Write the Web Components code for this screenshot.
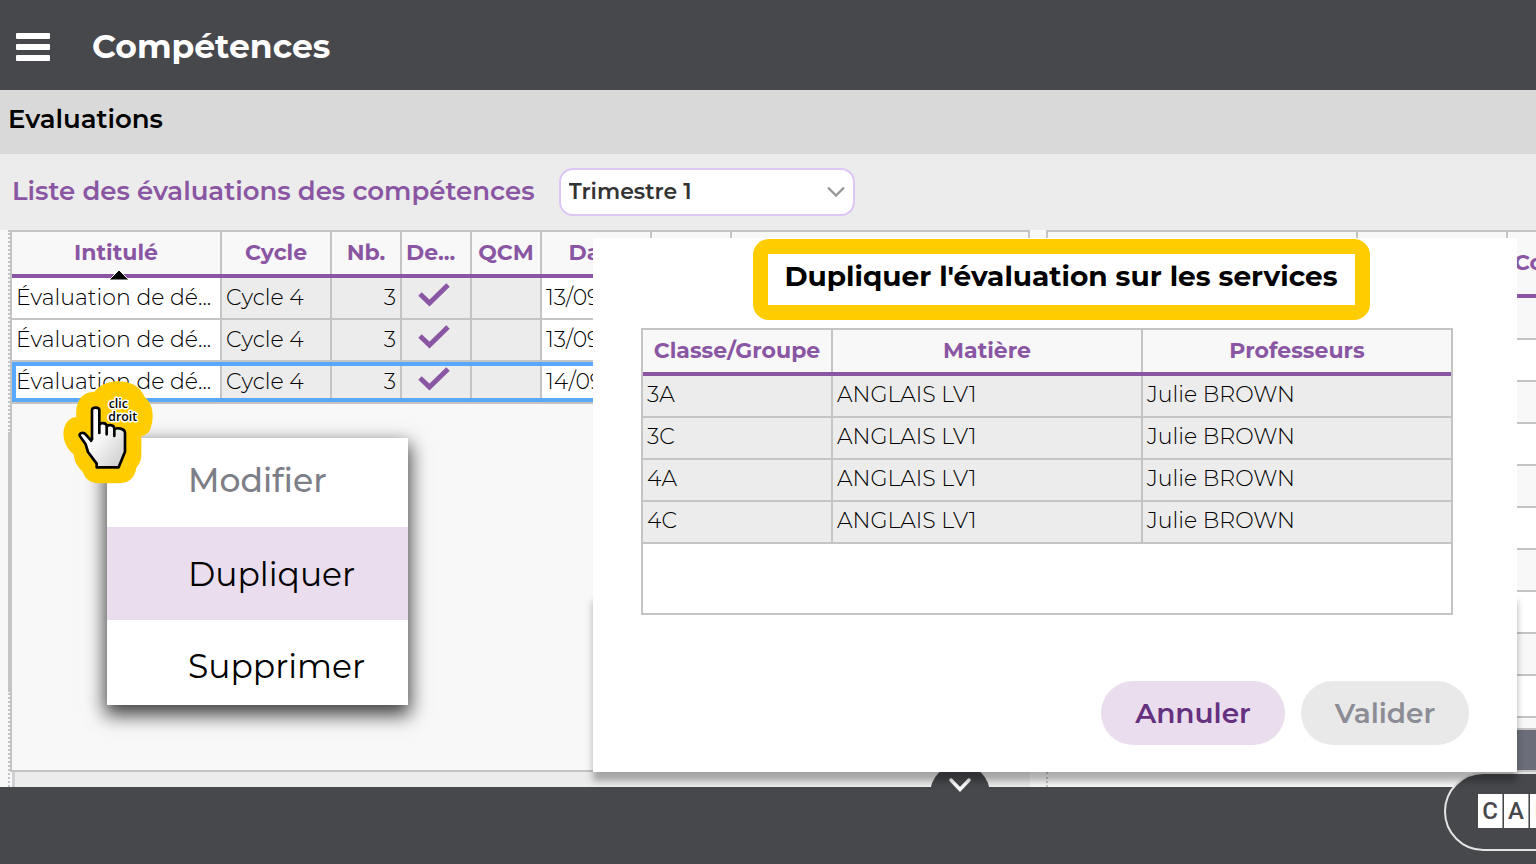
<!DOCTYPE html>
<html lang="fr">
<head>
<meta charset="utf-8">
<title>Compétences</title>
<style>
html, body { margin: 0; height: 100%; }
body { overflow: hidden; font-family: Montserrat, Inter, "Open Sans", sans-serif; font-size: 22px; color: #000;
  --violet: #8a56a3; --line: #c4c4c4; --dark: #47484c; --pale: #f8f8f8; --grey: #ececec; --mark: #fc0; }
</style>
</head>
<body>
<competence-app></competence-app>
<script>
const define = (name, html, setup) => {
  const template = document.createElement('template');
  template.innerHTML = html;
  customElements.define(name, class extends HTMLElement {
    constructor() {
      super();
      this.attachShadow({ mode: 'open' }).append(template.content.cloneNode(true));
    }
    connectedCallback() { if (setup) setup(this, this.shadowRoot); }
  });
};

define('app-header', `
<style>
:host { display: flex; align-items: center; gap: 42px; height: 90px; padding: 0 16px; background: var(--dark); color: #fff; box-sizing: border-box; }
button { all: unset; width: 34px; height: 30px; margin-top: 4px; }
svg { display: block; }
h1 { margin: 2px 0 0; font-size: 33px; line-height: 44px; font-weight: 700; }
</style>
<button aria-label="Menu"><svg width="34" height="30"><g fill="#fff"><rect y="1" width="34" height="6" rx="1"/><rect y="12" width="34" height="6" rx="1"/><rect y="23" width="34" height="6" rx="1"/></g></svg></button>
<h1><slot></slot></h1>`);

define('page-band', `
<style>
:host { display: block; height: 64px; padding: 12px 8px; background: #d9d9d9; box-sizing: border-box; }
h2 { margin: 0; font-size: 26px; line-height: 34px; font-weight: 600; }
</style>
<h2><slot></slot></h2>`);

define('filter-bar', `
<style>
:host { display: flex; align-items: center; gap: 24px; height: 76px; padding: 0 12px; background: var(--grey); box-sizing: border-box; }
label { color: var(--violet); font-size: 26px; line-height: 32px; font-weight: 600; padding-bottom: 2px; }
.box { position: relative; width: 296px; height: 48px; }
select { appearance: none; width: 100%; height: 100%; margin: 0; padding: 0 8px; border: 2px solid #dcc6f5; border-radius: 14px; background: #fff; color: #333; font: 600 22px/30px Montserrat, Inter, sans-serif; }
svg { position: absolute; right: 10px; top: 18px; }
</style>
<label for="period"><slot></slot></label>
<div class="box"><select id="period"><option>Trimestre 1</option></select>
<svg width="18" height="12" fill="none" stroke="#999" stroke-width="2.4"><path d="M1 1.500 9 9.500l8-8"/></svg></div>`);

define('check-mark', `
<style>:host { display: block; } svg { display: block; margin: 4px auto 0; }</style>
<svg width="34" height="26" fill="none" stroke="#8a56a3" stroke-width="5"><path d="M3 12 12.500 21 31 3"/></svg>`);

define('eval-table', `
<style>
:host { display: block; flex: none; width: 1020px; border: 2px solid var(--line); background: var(--pale); box-sizing: border-box; }
table { table-layout: fixed; width: 100%; border-spacing: 0; }
th, td { box-sizing: border-box; padding: 0 4px; overflow: hidden; white-space: nowrap; }
td { border-right: 2px solid var(--line); }
td:last-child { border-right: 0; }
th { height: 46px; padding-right: 6px; border-bottom: 4px solid var(--violet); background: linear-gradient(var(--line), var(--line)) right / 2px 100% no-repeat; color: var(--violet); line-height: 40px; font-weight: 700; }
th:last-child { background: none; }
th:nth-child(4) { text-align: left; }
td { height: 42px; border-bottom: 2px solid var(--line); background: var(--grey); line-height: 40px; font-weight: 300; vertical-align: top; }
td:first-child { background: #fff; }
td:nth-child(n+6) { background: #fff; }
td:nth-child(3) { text-align: right; }
td:nth-child(4) { padding-right: 8px; }
.sorted { position: relative; z-index: 1; overflow: visible; }
.sorted svg { position: absolute; left: 96px; top: 37px; }
.wrap { position: relative; }
.selection { position: absolute; left: 0; right: 0; bottom: 2px; height: 32px; border: 4px solid #4da3ffee; border-right: 0; }
</style>
<div class="wrap">
<table>
<colgroup><col style="width:210px"><col style="width:110px"><col style="width:70px"><col style="width:70px"><col style="width:70px"><col style="width:110px"><col style="width:80px"><col></colgroup>
<thead><tr><th class="sorted">Intitulé<svg width="22" height="12"><path d="M1 11 11 1 21 11z" fill="#000" stroke="#fff"/></svg></th><th>Cycle</th><th>Nb.</th><th>De...</th><th>QCM</th><th>Date</th><th></th><th></th></tr></thead>
<tbody></tbody>
</table>
<div class="selection"></div>
</div>`, (host, root) => {
  root.querySelector('tbody').innerHTML = ['13/09', '13/09', '14/09'].map(d =>
    `<tr><td>Évaluation de dé...</td><td>Cycle 4</td><td>3</td><td><check-mark></check-mark></td><td></td><td>${d}</td><td></td><td></td></tr>`).join('');
});

define('result-table', `
<style>
:host { display: flex; flex-direction: column; flex: 1; min-width: 0; border: 2px solid var(--line); border-right: 0; overflow: hidden; background: var(--pale); box-sizing: border-box; }
table { table-layout: fixed; width: 600px; border-spacing: 0; }
th, td { box-sizing: border-box; padding: 0 6px; border-right: 2px solid var(--line); }
th { height: 66px; border-bottom: 4px solid var(--violet); color: var(--violet); line-height: 30px; font-weight: 700; text-align: left; }
td { height: 42px; border-bottom: 2px solid var(--line); }
tr:nth-child(even) td { background: #fff; }
.total { height: 40px; margin-top: auto; border-top: 2px solid var(--line); background: #6b6e78; }
</style>
<table><colgroup><col style="width:310px"><col style="width:150px"><col></colgroup>
<thead><tr><th></th><th></th><th>Coef.</th></tr></thead>
<tbody></tbody></table>
<div class="total"></div>`, (host, root) => {
  root.querySelector('tbody').innerHTML = '<tr><td></td><td></td><td></td></tr>'.repeat(10);
});

define('click-hand', `
<style>:host { display: block; width: 90px; height: 103px; } svg { display: block; }</style>
<svg width="90" height="103" viewBox="38 32 270 309">
<defs><linearGradient id="g" x1="0" y1="0" x2="1" y2="1"><stop offset=".4" stop-color="#fff"/><stop offset="1" stop-color="#c8c8c8"/></linearGradient></defs>
<path fill="#fc0" d="M78 141C76 105 84 66 132 64 155 38 181 33 205 33 240 33 270 48 283 80 312 104 309 145 303 165 300 185 290 193 273 198V252C273 270 268 280 258 292 253 325 236 338 200 339H150C112 339 102 319 98 306 78 284 73 275 70 252 30 220 32 164 60 146 66 142 72 140 78 141Z"/>
<path fill="url(#g)" stroke="#000" stroke-width="8" stroke-linejoin="round" d="M125 209V120C125 109 147 109 147 120V188 164C149 156 167 156 169 166V192 170C172 162 190 162 192 174V197 178C198 170 224 174 224 188V244L205 291H139V280L113 245 106 222 88 196C86 187 100 185 106 192L125 214"/>
<text font-family="Open Sans, sans-serif" font-size="37" font-weight="600" fill="#000" stroke="#fff" stroke-width="9" stroke-linejoin="round" paint-order="stroke"><tspan x="175" y="114">clic</tspan><tspan x="174" y="153">droit</tspan></text>
</svg>`);

define('context-menu', `
<style>
:host { display: block; width: 301px; background: #fff; box-shadow: 0 8px 18px 2px rgba(0,0,0,.75); }
button { all: unset; display: block; box-sizing: border-box; width: 100%; height: 93px; padding-left: 81px; font-size: 33px; line-height: 80px; font-weight: 400; }
button:disabled { height: 89px; padding-bottom: 6px; font-weight: 500; color: #7d7f88; }
button:nth-of-type(2) { background: #eaddee; }
button:last-child { height: 85px; padding-top: 8px; line-height: 77px; }
</style>
<button disabled>Modifier</button><button>Dupliquer</button><button>Supprimer</button>`);

define('service-table', `
<style>
:host { display: block; height: 287px; border: 2px solid var(--line); background: #fff; box-sizing: border-box; }
table { table-layout: fixed; width: 100%; border-spacing: 0; }
th, td { box-sizing: border-box; white-space: nowrap; text-align: left; }
td { border-right: 2px solid var(--line); }
td:last-child { border-right: 0; }
th { height: 46px; padding: 0 2px 0 0; border-bottom: 4px solid var(--violet); background: linear-gradient(var(--line), var(--line)) right / 2px 100% no-repeat var(--pale); color: var(--violet); line-height: 40px; font-weight: 700; text-align: center; }
th:last-child { padding: 0; background: var(--pale); }
td { height: 42px; padding: 0 4px; border-bottom: 2px solid var(--line); background: var(--grey); line-height: 38px; font-weight: 300; vertical-align: top; }
</style>
<table><colgroup><col style="width:190px"><col style="width:310px"><col></colgroup>
<thead><tr><th>Classe/Groupe</th><th>Matière</th><th>Professeurs</th></tr></thead><tbody></tbody></table>`, (host, root) => {
  root.querySelector('tbody').innerHTML = ['3A', '3C', '4A', '4C'].map(c =>
    `<tr><td>${c}</td><td>ANGLAIS LV1</td><td>Julie BROWN</td></tr>`).join('');
});

define('duplicate-dialog', `
<style>
:host { display: block; background: #fff; }
.shade { position: absolute; z-index: -1; left: 0; right: 0; bottom: 0; height: 180px; box-shadow: 0 9px 7px rgba(0,0,0,.3); }
.panel { display: flex; flex-direction: column; height: 534px; box-sizing: border-box; padding: 1px 48px 27px; background: #fff; }
h2 { align-self: center; box-sizing: border-box; height: 81px; margin: 0 0 8px 12px; border-radius: 16px; padding: 15px; background: var(--mark); font-size: 28px; line-height: 45px; font-weight: 700; }
h2 span { display: block; box-sizing: border-box; width: 587px; height: 51px; background: #fff; text-align: center; }
service-table { width: 812px; }
.actions { display: flex; justify-content: flex-end; gap: 16px; margin-top: auto; }
button { all: unset; box-sizing: border-box; width: 184px; height: 64px; border-radius: 32px; text-align: center; background: #eaddee; color: #65307f; font-size: 28px; line-height: 64px; font-weight: 600; }
button:disabled { width: 168px; background: #e9e9e9; color: #8b8c95; }
</style>
<div class="shade"></div>
<div class="panel">
<h2><span>Dupliquer l'évaluation sur les services</span></h2>
<service-table></service-table>
<div class="actions"><button>Annuler</button><button disabled>Valider</button></div>
</div>`);

define('app-footer', `
<style>
:host { display: block; position: relative; height: 77px; background: var(--dark); }
.tab { all: unset; position: absolute; left: 930px; top: -23px; width: 60px; height: 60px; border-radius: 50%; background: var(--dark); }
.chevron { position: absolute; left: 948px; top: -10px; }
.brand { position: absolute; right: -60px; top: -15px; display: flex; align-items: center; box-sizing: border-box; width: 152px; height: 79px; padding: 0 0 2px 32px; border: 2px solid #e4e4e4; border-radius: 40px; background: var(--dark); }
.brand span { flex: none; box-sizing: border-box; width: 25px; height: 34px; margin-right: 1px; border-right: 1px solid #999; background: #fff; color: #47484c; font: 500 24px/35px Roboto, sans-serif; text-align: center; }
</style>
<button class="tab" aria-label="Ouvrir"></button>
<svg class="chevron" width="24" height="16" fill="none" stroke="#fff" stroke-width="3.500" stroke-linecap="round"><path d="M3 3 12 12.500 21 3"/></svg>
<div class="brand"><span>C</span><span>A</span><span>R</span></div>`);

define('competence-app', `
<style>
:host { display: flex; flex-direction: column; position: relative; min-height: 100vh; overflow: hidden; background: var(--pale); }
main { flex: 1; display: flex; position: relative; }
.rail { flex: none; position: relative; width: 10px; box-sizing: border-box; border-right: 2px dotted var(--line); }
.rail::after { content: ""; position: absolute; left: 8px; top: 202px; width: 2px; height: 260px; background: var(--line); }
.left { flex: none; display: flex; flex-direction: column; width: 1020px; }
.left eval-table { flex: 1; }
.strip { height: 15px; margin-left: 2px; border-left: 3px solid #d0d1d4; background: var(--grey); box-sizing: border-box; }
.right { flex: 1; display: flex; min-width: 0; flex-direction: column; margin-left: 16px; }
.end { height: 15px; border-left: 2px dotted var(--line); }
context-menu { position: absolute; left: 107px; top: 438px; }
click-hand { position: absolute; left: 63px; top: 381px; }
duplicate-dialog { position: absolute; z-index: 2; left: 593px; right: 19px; top: 238px; isolation: isolate; }
</style>
<app-header>Compétences</app-header>
<page-band>Evaluations</page-band>
<filter-bar>Liste des évaluations des compétences</filter-bar>
<main>
<div class="rail"></div>
<div class="left"><eval-table></eval-table><div class="strip"></div></div>
<div class="right"><result-table></result-table><div class="end"></div></div>
</main>
<app-footer></app-footer>
<context-menu></context-menu>
<click-hand></click-hand>
<duplicate-dialog></duplicate-dialog>`);
</script>
</body>
</html>
